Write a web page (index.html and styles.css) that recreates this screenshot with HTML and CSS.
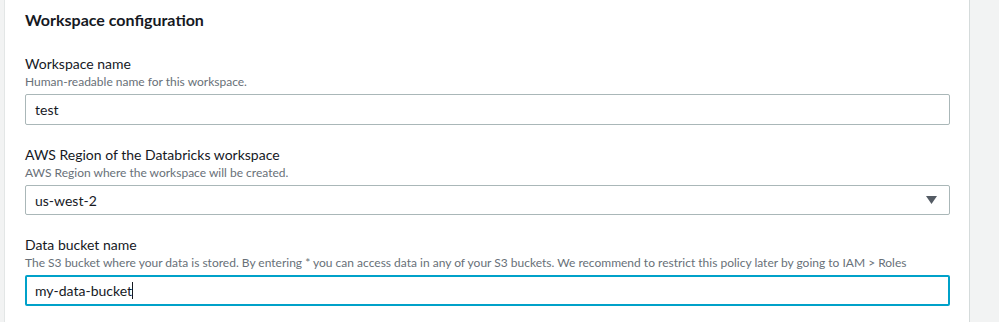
FILE: index.html
```html
<!DOCTYPE html>
<html lang="en">
<head>
    <meta charset="UTF-8">
    <title>Workspace configuration</title>
    <link rel="stylesheet" href="styles.css">
</head>
<body>
    <div class="panel">
        <h2>Workspace configuration</h2>

        <div class="field">
            <p class="label">Workspace name</p>
            <p class="desc">Human-readable name for this workspace.</p>
            <div class="input">test</div>
        </div>

        <div class="field">
            <p class="label">AWS Region of the Databricks workspace</p>
            <p class="desc">AWS Region where the workspace will be created.</p>
            <div class="input select">
                <span>us-west-2</span>
                <svg class="arrow" width="11" height="8" viewBox="0 0 11 8"><path d="M0 0 H11 L5.5 8 Z" fill="#545b64"/></svg>
            </div>
        </div>

        <div class="field">
            <p class="label">Data bucket name</p>
            <p class="desc">The S3 bucket where your data is stored. By entering * you can access data in any of your S3 buckets. We recommend to restrict this policy later by going to IAM &gt; Roles</p>
            <div class="input focus">my-data-bucket<span class="caret"></span></div>
        </div>
    </div>
</body>
</html>
```

FILE: styles.css
```css
body {
    margin: 0;
    background-color: #f2f3f3;
    font-family: Lato, "Liberation Sans", Arial, sans-serif;
    color: #16191f;
}

.panel {
    margin-left: 4px;
    width: 966px;
    height: 322px;
    background-color: #ffffff;
    border-left: 1px solid #e3e6e6;
    border-right: 1px solid #d5dbdb;
    padding: 8px 19px 0 20px;
    box-sizing: border-box;
}

h2 {
    margin: 0 0 22px 0;
    font-size: 16px;
    line-height: 24px;
    font-weight: bold;
}

.field {
    margin-bottom: 20px;
}

.label {
    margin: 0;
    font-size: 14px;
    line-height: 20px;
}

.desc {
    margin: 0;
    font-size: 12px;
    line-height: 16px;
    color: #687078;
    white-space: nowrap;
}

/* Campos */
.input {
    margin-top: 4px;
    height: 31px;
    box-sizing: border-box;
    border: 1px solid #aab7b8;
    border-radius: 2px;
    padding: 0 9px;
    font-size: 14px;
    line-height: 29px;
    display: flex;
    align-items: center;
}

.select {
    height: 30px;
    justify-content: space-between;
    padding-right: 12px;
}

.focus {
    border: 2px solid #00a1c9;
    padding: 0 8px;
}

.caret {
    display: inline-block;
    width: 1px;
    height: 17px;
    background-color: #16191f;
}
```
